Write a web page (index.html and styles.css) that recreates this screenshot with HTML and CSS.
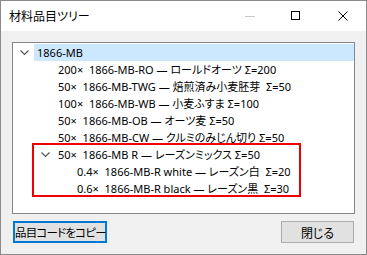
FILE: index.html
```html
<!DOCTYPE html>
<html lang="ja">
<head>
  <meta charset="UTF-8" />
  <title>材料品目ツリー</title>
  <link rel="stylesheet" href="styles.css">
</head>
<body>

  <div class="window">

    <!-- Title bar -->
    <div class="titlebar">
      <div class="title">材料品目ツリー</div>
      <div class="controls">
        <span class="ctl ctl-min"><svg width="10" height="10" viewBox="0 0 10 10"><path d="M0 5.5H10" stroke="#c8c8c8" stroke-width="1"/></svg></span>
        <span class="ctl ctl-max"><svg width="10" height="10" viewBox="0 0 10 10"><rect x="0.5" y="0.5" width="8" height="8" fill="none" stroke="#000" stroke-width="1"/></svg></span>
        <span class="ctl ctl-close"><svg width="10" height="10" viewBox="0 0 10 10"><path d="M0.5 0.5L9.5 9.5M9.5 0.5L0.5 9.5" stroke="#000" stroke-width="1"/></svg></span>
      </div>
    </div>

    <!-- Dialog body -->
    <div class="content">
      <div class="tree">
        <div class="row lvl0 open">
          <span class="toggle"><svg width="9" height="6" viewBox="0 0 9 6"><path d="M0.5 0.5L4.5 4.5L8.5 0.5" fill="none" stroke="#555" stroke-width="1.2"/></svg></span>
          <span class="label selected">1866-MB</span>
        </div>
        <div class="row lvl1"><span class="label">200×  1866-MB-RO — ロールドオーツ Σ=200</span></div>
        <div class="row lvl1"><span class="label">50×  1866-MB-TWG — 焙煎済み小麦胚芽  Σ=50</span></div>
        <div class="row lvl1"><span class="label">100×  1866-MB-WB — 小麦ふすま Σ=100</span></div>
        <div class="row lvl1"><span class="label">50×  1866-MB-OB — オーツ麦 Σ=50</span></div>
        <div class="row lvl1"><span class="label">50×  1866-MB-CW — クルミのみじん切り Σ=50</span></div>
        <div class="row lvl1 open">
          <span class="toggle"><svg width="9" height="6" viewBox="0 0 9 6"><path d="M0.5 0.5L4.5 4.5L8.5 0.5" fill="none" stroke="#555" stroke-width="1.2"/></svg></span>
          <span class="label">50×  1866-MB R — レーズンミックス Σ=50</span>
        </div>
        <div class="row lvl2"><span class="label">0.4×  1866-MB-R white — レーズン白  Σ=20</span></div>
        <div class="row lvl2"><span class="label">0.6×  1866-MB-R black — レーズン黒  Σ=30</span></div>

        <!-- red annotation around the raisin group -->
        <div class="mark"></div>
      </div>

      <div class="buttons">
        <button class="btn btn-default">品目コードをコピー</button>
        <button class="btn">閉じる</button>
      </div>
    </div>

  </div>

</body>
</html>
```

FILE: styles.css
```css
body {
  margin: 0;
  font-family: "Noto Sans", "Noto Sans CJK JP", sans-serif;
  font-size: 11px;
  font-feature-settings: "palt";
  color: #000;
  background: #f0f0f0;
}

/* Window frame */
.window {
  width: 367px;
  height: 255px;
  box-sizing: border-box;
  border: 1px solid #8a8a8a;
  background: #f0f0f0;
  display: flex;
  flex-direction: column;
}

/* Title bar */
.titlebar {
  height: 30px;
  background: #fff;
  display: flex;
  align-items: center;
  justify-content: space-between;
}

.title {
  padding-left: 8px;
  font-family: "Noto Sans CJK JP", sans-serif;
  font-size: 12px;
  line-height: 16px;
}

.controls {
  display: flex;
  height: 100%;
}

.ctl {
  width: 46px;
  display: flex;
  align-items: center;
  justify-content: center;
}

.ctl svg {
  display: block;
}

.ctl-close {
  width: 47px;
}

/* Body */
.content {
  flex: 1;
  padding: 11px;
  display: flex;
  flex-direction: column;
}

/* Tree view */
.tree {
  position: relative;
  height: 172px;
  box-sizing: border-box;
  border: 1px solid #828790;
  background: #fff;
  padding-top: 1px;
}

.row {
  height: 17px;
  display: flex;
  align-items: center;
  white-space: pre;
}

.toggle {
  width: 20px;
  height: 17px;
  display: flex;
  align-items: center;
  justify-content: center;
  margin-left: -20px;
}

.toggle svg {
  display: block;
}

.label {
  height: 17px;
  line-height: 17px;
  padding-left: 3px;
}

.lvl0 { padding-left: 21px; }
.lvl1 { padding-left: 42px; }
.lvl2 { padding-left: 61px; }

.label.selected {
  flex: 1;
  background: #cce8ff;
}

.mark {
  position: absolute;
  left: 19px;
  top: 100px;
  width: 265px;
  height: 50px;
  border: 2px solid #f00000;
}

/* Buttons */
.buttons {
  margin-top: 7px;
  display: flex;
  justify-content: space-between;
}

.btn {
  height: 22px;
  box-sizing: border-box;
  background: #e1e1e1;
  border: 1px solid #adadad;
  font-family: "Noto Sans CJK JP", sans-serif;
  font-size: 12px;
  font-feature-settings: "palt";
  white-space: nowrap;
  color: #000;
  padding: 0;
  width: 73px;
  margin-right: 1px;
}

.btn-default {
  width: 94px;
  margin-left: 1px;
  border: 2px solid #0078d7;
  font-size: 11.5px;
  letter-spacing: -0.8px;
}
```
